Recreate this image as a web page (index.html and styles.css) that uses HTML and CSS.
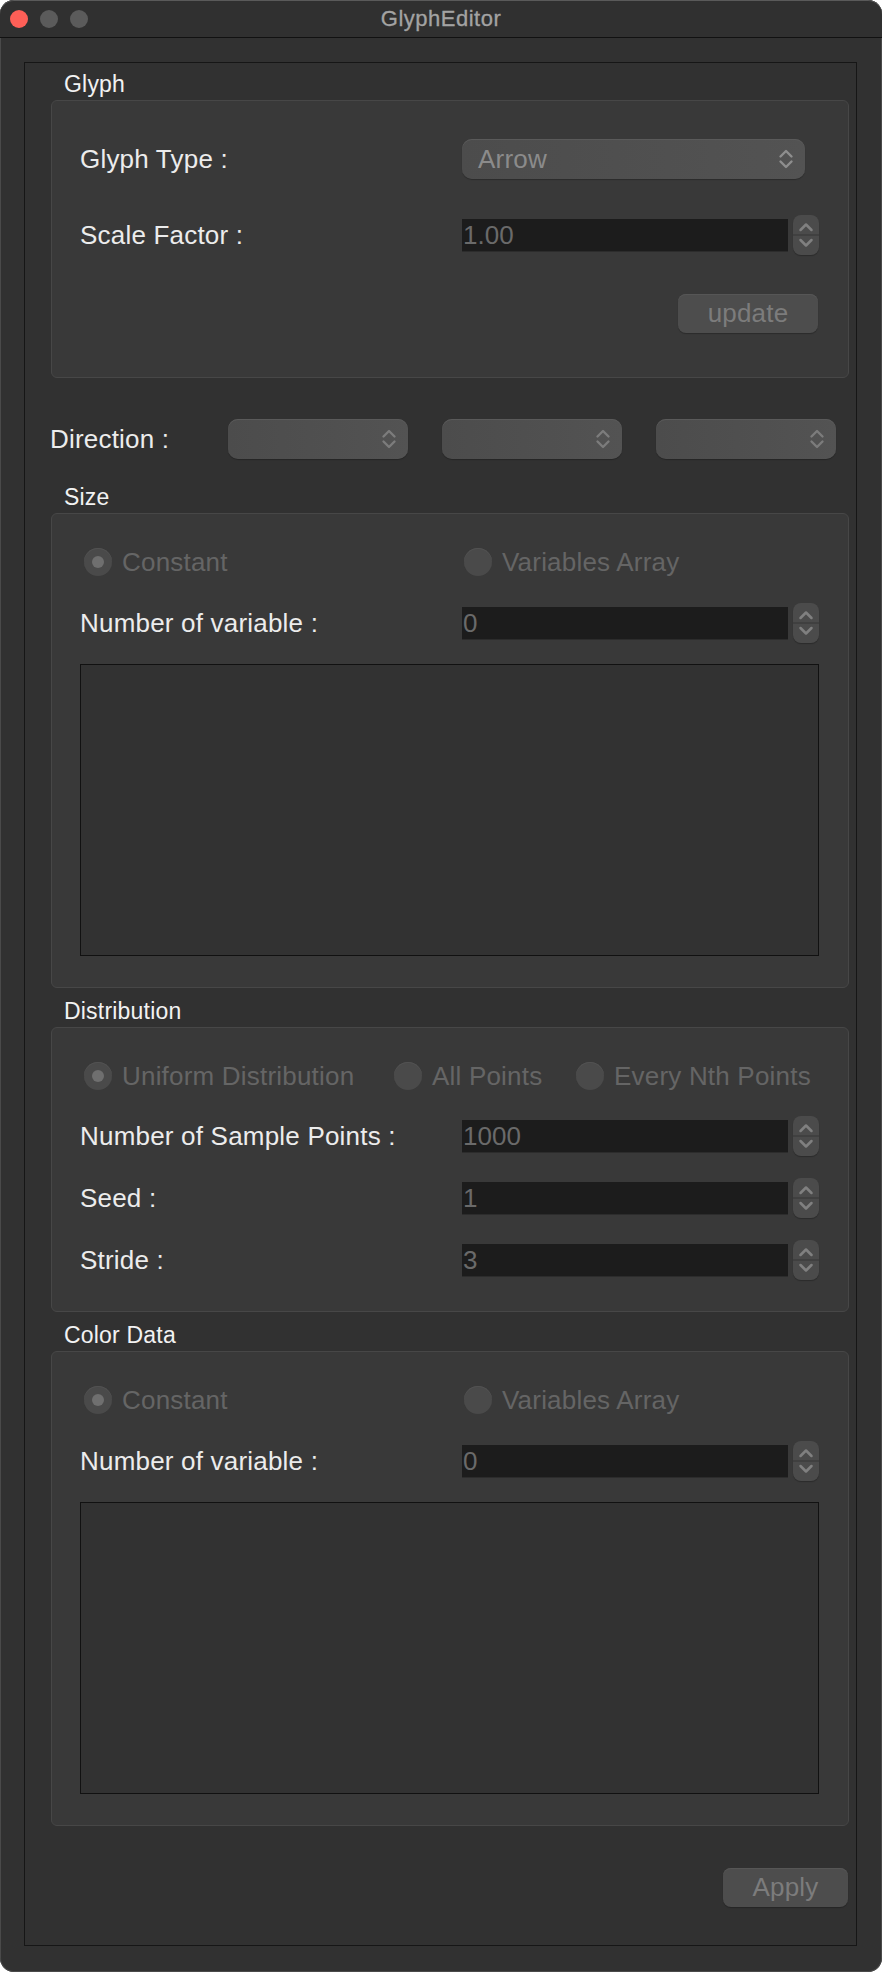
FILE: index.html
```html
<!DOCTYPE html>
<html>
<head>
<meta charset="utf-8">
<title>GlyphEditor</title>
<link rel="stylesheet" href="styles.css">
</head>
<body>
<div class="window">
  <div class="titlebar">
    <div class="lights">
      <span class="light light-red"></span>
      <span class="light"></span>
      <span class="light"></span>
    </div>
    <div class="title">GlyphEditor</div>
    <div></div>
  </div>

  <div class="frame">
    <div class="section-title">Glyph</div>
    <div class="group group-glyph">
      <div class="row">
        <div class="label">Glyph Type :</div>
        <div class="combo combo-wide">
          <span class="combo-text">Arrow</span>
          <svg class="updown" width="16" height="24" viewBox="0 0 16 24"><path d="M2.5 9.5 L8 4 L13.5 9.5 M2.5 14.5 L8 20 L13.5 14.5" fill="none" stroke="#8e8e8e" stroke-width="2.4" stroke-linecap="round" stroke-linejoin="round"/></svg>
        </div>
      </div>
      <div class="row row-gap-36">
        <div class="label">Scale Factor :</div>
        <div class="spin">
          <div class="spin-field">1.00</div>
          <div class="spin-btns"><svg width="26" height="40" viewBox="0 0 26 40"><path d="M0 20 H26" stroke="#3d3d3d" stroke-width="1.5"/><path d="M7.5 15 L13 9.5 L18.5 15 M7.5 25 L13 30.5 L18.5 25" fill="none" stroke="#808080" stroke-width="2.5" stroke-linecap="round" stroke-linejoin="round"/></svg></div>
        </div>
      </div>
      <div class="row row-gap-39 row-end">
        <div class="btn btn-update">update</div>
      </div>
    </div>

    <div class="direction">
      <div class="label">Direction :</div>
      <div class="combo"><svg class="updown" width="16" height="24" viewBox="0 0 16 24"><path d="M2.5 9.5 L8 4 L13.5 9.5 M2.5 14.5 L8 20 L13.5 14.5" fill="none" stroke="#7c7c7c" stroke-width="2.4" stroke-linecap="round" stroke-linejoin="round"/></svg></div>
      <div class="combo"><svg class="updown" width="16" height="24" viewBox="0 0 16 24"><path d="M2.5 9.5 L8 4 L13.5 9.5 M2.5 14.5 L8 20 L13.5 14.5" fill="none" stroke="#7c7c7c" stroke-width="2.4" stroke-linecap="round" stroke-linejoin="round"/></svg></div>
      <div class="combo"><svg class="updown" width="16" height="24" viewBox="0 0 16 24"><path d="M2.5 9.5 L8 4 L13.5 9.5 M2.5 14.5 L8 20 L13.5 14.5" fill="none" stroke="#7c7c7c" stroke-width="2.4" stroke-linecap="round" stroke-linejoin="round"/></svg></div>
    </div>

    <div class="section-title title-size">Size</div>
    <div class="group group-list">
      <div class="radios radios-two">
        <div class="radio"><span class="dot dot-on"></span><span class="radio-text">Constant</span></div>
        <div class="radio"><span class="dot"></span><span class="radio-text">Variables Array</span></div>
      </div>
      <div class="row row-gap-21">
        <div class="label">Number of variable :</div>
        <div class="spin">
          <div class="spin-field">0</div>
          <div class="spin-btns"><svg width="26" height="40" viewBox="0 0 26 40"><path d="M0 20 H26" stroke="#3d3d3d" stroke-width="1.5"/><path d="M7.5 15 L13 9.5 L18.5 15 M7.5 25 L13 30.5 L18.5 25" fill="none" stroke="#808080" stroke-width="2.5" stroke-linecap="round" stroke-linejoin="round"/></svg></div>
        </div>
      </div>
      <div class="listbox"></div>
    </div>

    <div class="section-title title-next">Distribution</div>
    <div class="group group-dist">
      <div class="radios radios-three">
        <div class="radio"><span class="dot dot-on"></span><span class="radio-text">Uniform Distribution</span></div>
        <div class="radio"><span class="dot"></span><span class="radio-text">All Points</span></div>
        <div class="radio"><span class="dot"></span><span class="radio-text">Every Nth Points</span></div>
      </div>
      <div class="row row-gap-20">
        <div class="label">Number of Sample Points :</div>
        <div class="spin">
          <div class="spin-field">1000</div>
          <div class="spin-btns"><svg width="26" height="40" viewBox="0 0 26 40"><path d="M0 20 H26" stroke="#3d3d3d" stroke-width="1.5"/><path d="M7.5 15 L13 9.5 L18.5 15 M7.5 25 L13 30.5 L18.5 25" fill="none" stroke="#808080" stroke-width="2.5" stroke-linecap="round" stroke-linejoin="round"/></svg></div>
        </div>
      </div>
      <div class="row row-gap-22">
        <div class="label">Seed :</div>
        <div class="spin">
          <div class="spin-field">1</div>
          <div class="spin-btns"><svg width="26" height="40" viewBox="0 0 26 40"><path d="M0 20 H26" stroke="#3d3d3d" stroke-width="1.5"/><path d="M7.5 15 L13 9.5 L18.5 15 M7.5 25 L13 30.5 L18.5 25" fill="none" stroke="#808080" stroke-width="2.5" stroke-linecap="round" stroke-linejoin="round"/></svg></div>
        </div>
      </div>
      <div class="row row-gap-22">
        <div class="label">Stride :</div>
        <div class="spin">
          <div class="spin-field">3</div>
          <div class="spin-btns"><svg width="26" height="40" viewBox="0 0 26 40"><path d="M0 20 H26" stroke="#3d3d3d" stroke-width="1.5"/><path d="M7.5 15 L13 9.5 L18.5 15 M7.5 25 L13 30.5 L18.5 25" fill="none" stroke="#808080" stroke-width="2.5" stroke-linecap="round" stroke-linejoin="round"/></svg></div>
        </div>
      </div>
    </div>

    <div class="section-title title-next">Color Data</div>
    <div class="group group-list">
      <div class="radios radios-two">
        <div class="radio"><span class="dot dot-on"></span><span class="radio-text">Constant</span></div>
        <div class="radio"><span class="dot"></span><span class="radio-text">Variables Array</span></div>
      </div>
      <div class="row row-gap-21">
        <div class="label">Number of variable :</div>
        <div class="spin">
          <div class="spin-field">0</div>
          <div class="spin-btns"><svg width="26" height="40" viewBox="0 0 26 40"><path d="M0 20 H26" stroke="#3d3d3d" stroke-width="1.5"/><path d="M7.5 15 L13 9.5 L18.5 15 M7.5 25 L13 30.5 L18.5 25" fill="none" stroke="#808080" stroke-width="2.5" stroke-linecap="round" stroke-linejoin="round"/></svg></div>
        </div>
      </div>
      <div class="listbox"></div>
    </div>

    <div class="footer">
      <div class="btn btn-apply">Apply</div>
    </div>
  </div>
</div>
</body>
</html>
```

FILE: styles.css
```css
html, body {
  margin: 0;
  padding: 0;
  background: #ffffff;
}

body {
  font-family: "Liberation Sans", Arial, sans-serif;
  color: #ececec;
}

.window {
  width: 882px;
  height: 1972px;
  box-sizing: border-box;
  background: #313131;
  border-radius: 14px;
  overflow: hidden;
  box-shadow: inset 0 0 0 1px #4a4a4a;
}

.titlebar {
  height: 37px;
  border-bottom: 1px solid #111111;
  display: grid;
  grid-template-columns: 1fr auto 1fr;
  align-items: center;
  background: #303030;
  border-top-left-radius: 14px;
  border-top-right-radius: 14px;
  box-shadow: inset 0 1px 0 #5a5a5a;
}

.lights {
  display: flex;
  align-items: center;
  gap: 12px;
  padding-left: 10px;
}

.light {
  width: 18px;
  height: 18px;
  border-radius: 50%;
  background: #5b5b5b;
}

.light-red {
  background: #fe5f57;
}

.title {
  font-size: 22px;
  font-weight: normal;
  letter-spacing: 0.5px;
  color: #a3a3a3;
  line-height: 37px;
  -webkit-text-stroke: 0.3px #a3a3a3;
}

.frame {
  margin: 24px 25px 0 24px;
  height: 1884px;
  box-sizing: border-box;
  border: 1px solid #161616;
  padding: 6px 7px 0 26px;
  display: flex;
  flex-direction: column;
}

.section-title {
  height: 31px;
  line-height: 30px;
  font-size: 23px;
  letter-spacing: 0.2px;
  padding-left: 13px;
  color: #f2f2f2;
}

.title-size {
  margin-top: 23px;
}

.title-next {
  margin-top: 8px;
}

.group {
  border: 1px solid #474747;
  border-radius: 6px;
  background: #393939;
  display: flex;
  flex-direction: column;
  padding-left: 28px;
}

.group-glyph {
  padding-top: 38px;
  padding-bottom: 44px;
}

.group-list {
  padding-top: 28px;
  padding-bottom: 31px;
}

.group-dist {
  padding-top: 28px;
  padding-bottom: 31px;
}

.row {
  display: flex;
  align-items: center;
  height: 40px;
}

.row-gap-20 { margin-top: 20px; }
.row-gap-21 { margin-top: 21px; }
.row-gap-22 { margin-top: 22px; }
.row-gap-36 { margin-top: 36px; }
.row-gap-39 { margin-top: 39px; height: 39px; }

.row-end {
  justify-content: flex-end;
  padding-right: 30px;
}

.label {
  width: 382px;
  flex: none;
  font-size: 26px;
  letter-spacing: 0.2px;
  line-height: 40px;
  color: #ececec;
  white-space: nowrap;
}

.combo {
  height: 40px;
  box-sizing: border-box;
  border-radius: 10px;
  background: linear-gradient(90deg, #4c4c4c 0%, #505050 60%, #535353 100%);
  box-shadow: inset 0 1px 0 #5a5a5a, 0 1px 1px rgba(0, 0, 0, 0.25);
  display: flex;
  align-items: center;
  padding: 0 11px 0 16px;
}

.combo-wide {
  width: 343px;
}

.combo-text {
  font-size: 26px;
  letter-spacing: 0.2px;
  color: #8b8b8b;
  flex: 1;
}

.updown {
  margin-left: auto;
  flex: none;
}

.spin {
  display: flex;
  align-items: center;
  gap: 5px;
}

.spin-field {
  width: 326px;
  height: 33px;
  box-sizing: border-box;
  background: #1c1c1c;
  border-bottom: 1px solid #2c2c2c;
  font-size: 26px;
  line-height: 33px;
  color: #6a6a6a;
  padding-left: 1px;
}

.spin-btns {
  width: 26px;
  height: 40px;
  border-radius: 8px;
  background: #4b4b4b;
  box-shadow: 0 1px 1px rgba(0, 0, 0, 0.25);
  overflow: hidden;
}

.spin-btns svg {
  display: block;
}

.btn {
  height: 39px;
  box-sizing: border-box;
  border-radius: 8px;
  background: #4d4d4d;
  box-shadow: inset 0 1px 0 #565656, 0 1px 1px rgba(0, 0, 0, 0.25);
  font-size: 26px;
  line-height: 39px;
  letter-spacing: 0.2px;
  color: #7c7c7c;
  text-align: center;
}

.btn-update {
  width: 140px;
}

.btn-apply {
  width: 125px;
}

.direction {
  margin-top: 41px;
  height: 40px;
  display: grid;
  grid-template-columns: 143px repeat(3, 180px);
  column-gap: 34px;
  align-items: center;
}

.direction .label {
  width: auto;
  margin-left: -1px;
}

.direction .combo {
  padding-right: 11px;
}

.radios {
  display: grid;
  height: 40px;
  align-items: center;
  padding-left: 4px;
}

.radios-two {
  grid-template-columns: 380px auto;
}

.radios-three {
  grid-template-columns: 310px 182px auto;
}

.radio {
  display: flex;
  align-items: center;
  gap: 10px;
  white-space: nowrap;
}

.dot {
  width: 28px;
  height: 28px;
  border-radius: 50%;
  background: #4a4a4a;
  box-shadow: inset 0 1px 0 #525252;
  display: flex;
  align-items: center;
  justify-content: center;
  flex: none;
}

.dot-on::after {
  content: "";
  width: 12px;
  height: 12px;
  border-radius: 50%;
  background: #6f6f6f;
}

.radio-text {
  font-size: 26px;
  letter-spacing: 0.2px;
  color: #656565;
  line-height: 40px;
}

.listbox {
  margin-top: 21px;
  width: 739px;
  height: 292px;
  box-sizing: border-box;
  border: 1px solid #111111;
  background: #323232;
}

.footer {
  margin-top: 42px;
  display: flex;
  justify-content: flex-end;
  padding-right: 1px;
}
```
